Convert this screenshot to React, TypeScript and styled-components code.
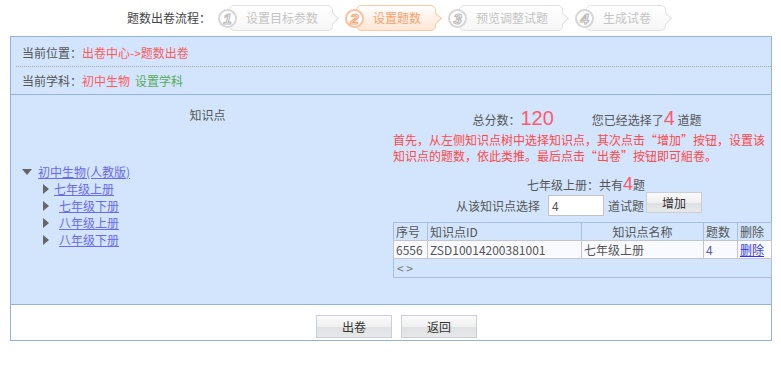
import React from "react";
import styled, { createGlobalStyle, css } from "styled-components";

const GlobalStyle = createGlobalStyle`
  html, body {
    margin: 0;
    padding: 0;
    background: #fff;
  }
  body {
    font-family: "Noto Sans CJK SC", "Liberation Sans", sans-serif;
    font-size: 12px;
    color: #555;
  }
`;

const Page = styled.div`
  width: 781px;
  padding-left: 10px;
  box-sizing: border-box;
`;

const Flow = styled.div`
  height: 36px;
  display: flex;
  align-items: center;
  padding-left: 117px;
`;

const FlowLabel = styled.span`
  color: #444;
  line-height: 16px;
  margin-right: 7px;
`;

const Step = styled.div`
  display: flex;
  align-items: center;
  margin-right: 12px;
`;

const StepNum = styled.span<{ $active?: boolean }>`
  position: relative;
  z-index: 1;
  width: 15px;
  height: 15px;
  margin-right: -8px;
  border-radius: 50%;
  border: 2px solid ${(p) => (p.$active ? "#fcc2a0" : "#d6d6d6")};
  background: #fff;
  display: flex;
  align-items: center;
  justify-content: center;
  font: italic bold 15px "Liberation Sans", sans-serif;
  color: #fff;
  -webkit-text-stroke: 1.2px ${(p) => (p.$active ? "#f7a878" : "#bdbdbd")};
`;

const StepBox = styled.div<{ $active?: boolean }>`
  position: relative;
  height: 24px;
  line-height: 24px;
  padding: 0 14px 0 16px;
  border: 1px solid #e0e0e0;
  border-radius: 5px;
  background: linear-gradient(#fff, #f6f6f6);
  color: #c4c4c4;

  &::after {
    content: "";
    position: absolute;
    right: -5px;
    top: 8px;
    width: 8px;
    height: 8px;
    transform: rotate(45deg);
    border-top: 1px solid #e0e0e0;
    border-right: 1px solid #e0e0e0;
    background: #fafafa;
  }

  ${(p) =>
    p.$active &&
    css`
      border-color: #fcc9a6;
      background: linear-gradient(#fff, #ffe6d4);
      color: #f7a06a;
      &::after {
        border-color: #fcc9a6;
        background: #fff0e5;
      }
    `}
`;

const Panel = styled.div`
  width: 762px;
  box-sizing: border-box;
  border: 1px solid #93b2e3;
  background: #d2e5fd;
`;

const InfoRow = styled.div<{ $dotted?: boolean }>`
  display: flex;
  align-items: center;
  margin-left: 5px;
  padding-left: 6px;
  height: ${(p) => (p.$dotted ? "30px" : "27px")};
  padding-top: ${(p) => (p.$dotted ? "2px" : "0")};
  box-sizing: border-box;
  border-bottom: ${(p) => (p.$dotted ? "1px dotted #a8a8a8" : "none")};
  line-height: 16px;
`;

const Red = styled.span`
  color: #ff5a5a;
`;

const Green = styled.span`
  color: #5aab5a;
  margin-left: 5px;
`;

const Main = styled.div`
  display: flex;
  height: 209px;
  border-top: 1px solid #93b2e3;
  border-bottom: 1px solid #93b2e3;
`;

const LeftCol = styled.div`
  width: 382px;
  padding-left: 11px;
  box-sizing: border-box;
`;

const ColTitle = styled.div`
  text-align: center;
  line-height: 16px;
  margin-top: 12px;
  color: #555;
`;

const Tree = styled.div`
  margin-top: 40px;
  line-height: 17px;
`;

const TreeRow = styled.div<{ $child?: boolean }>`
  display: flex;
  align-items: center;
  height: 17px;
  padding-left: ${(p) => (p.$child ? "21px" : "0")};
`;

const Caret = styled.span<{ $open?: boolean }>`
  width: 0;
  height: 0;
  ${(p) =>
    p.$open
      ? css`
          border-left: 5px solid transparent;
          border-right: 5px solid transparent;
          border-top: 6px solid #666;
          margin-right: 6px;
        `
      : css`
          border-top: 5px solid transparent;
          border-bottom: 5px solid transparent;
          border-left: 6px solid #666;
        `}
`;

const TreeLink = styled.a<{ $gap: number }>`
  color: #6a6aec;
  text-decoration: underline;
  margin-left: ${(p) => p.$gap}px;
`;

const RightCol = styled.div`
  width: 378px;
  display: flex;
  flex-direction: column;
`;

const ScoreRow = styled.div`
  display: flex;
  align-items: baseline;
  justify-content: center;
  margin-top: 13px;
  padding-left: 10px;
  height: 20px;
  color: #555;
`;

const Spacer = styled.span`
  width: 38px;
`;

const Big = styled.span<{ $size: number }>`
  color: #ff5a6a;
  font-family: "Liberation Sans", "DejaVu Sans", sans-serif;
  font-size: ${(p) => p.$size}px;
  line-height: 20px;
`;

const Hint = styled.div`
  color: #ff4848;
  line-height: 16px;
  margin-top: 4px;
  white-space: nowrap;
`;

const TotalRow = styled.div`
  display: flex;
  align-items: baseline;
  justify-content: center;
  margin-top: 10px;
  padding-left: 8px;
  height: 18px;
`;

const PickRow = styled.div`
  display: flex;
  align-items: center;
  justify-content: center;
  margin-top: 2px;
  padding-right: 6px;
  height: 22px;
`;

const NumInput = styled.input`
  width: 56px;
  height: 21px;
  box-sizing: border-box;
  margin: 0 4px 0 8px;
  padding: 0 3px;
  border: 1px solid #c3c3c3;
  background: #fff;
  font: 12px "Noto Sans CJK SC", sans-serif;
  color: #555;
`;

const GrayButton = styled.button<{ $w: number; $h: number }>`
  width: ${(p) => p.$w}px;
  height: ${(p) => p.$h}px;
  padding: 0;
  border: 1px solid #c9cfd6;
  background: linear-gradient(#fafafa 0%, #f0f0f0 50%, #dfe1e3 55%, #e8e8e8 100%);
  font: 12px "Noto Sans CJK SC", sans-serif;
  color: #333;
  line-height: ${(p) => p.$h - 6}px;
`;

const AddButton = styled(GrayButton)`
  margin-left: 2px;
  margin-top: -5px;
`;

const Table = styled.table`
  margin-top: 6px;
  width: 378px;
  border-collapse: collapse;
  table-layout: fixed;
  line-height: 17px;
  color: #555;
`;

const Th = styled.th<{ $w: number; $center?: boolean }>`
  width: ${(p) => p.$w - 5}px;
  height: 17px;
  padding: 0 2px;
  font-weight: normal;
  text-align: ${(p) => (p.$center ? "center" : "left")};
  border: 1px solid #a8bfe3;
  border-bottom-color: #c4c4cc;
`;

const Td = styled.td<{ $top?: boolean }>`
  height: 17px;
  padding: 0 2px;
  background: #f8faff;
  border: 1px solid #c4c4cc;
  vertical-align: ${(p) => (p.$top ? "top" : "middle")};
  white-space: nowrap;
  overflow: hidden;
`;

const Pager = styled.td`
  height: 18px;
  padding: 0 3px;
  border: 1px solid #a8bfe3;
  border-top-color: #c4c4cc;
  color: #777;
  line-height: 18px;
`;

const Count = styled.span`
  color: #5a5aa8;
`;

const DelLink = styled.a`
  color: #3333ee;
  text-decoration: underline;
`;

const Footer = styled.div`
  height: 35px;
  display: flex;
  justify-content: center;
  align-items: flex-start;
  gap: 9px;
  padding-top: 10px;
  padding-left: 11px;
  box-sizing: border-box;
  background: #fff;
`;

const steps = ["设置目标参数", "设置题数", "预览调整试题", "生成试卷"];
const grades = ["七年级上册", "七年级下册", "八年级上册", "八年级下册"];

export default function App() {
  return (
    <Page>
      <GlobalStyle />
      <Flow>
        <FlowLabel>题数出卷流程：</FlowLabel>
        {steps.map((s, i) => (
          <Step key={s}>
            <StepNum $active={i === 1}>{i + 1}</StepNum>
            <StepBox $active={i === 1}>{s}</StepBox>
          </Step>
        ))}
      </Flow>
      <Panel>
        <InfoRow $dotted>
          当前位置：<Red>出卷中心-&gt;题数出卷</Red>
        </InfoRow>
        <InfoRow>
          当前学科：<Red>初中生物</Red>
          <Green>设置学科</Green>
        </InfoRow>
        <Main>
          <LeftCol>
            <ColTitle>知识点</ColTitle>
            <Tree>
              <TreeRow>
                <Caret $open />
                <TreeLink $gap={0}>初中生物(人教版)</TreeLink>
              </TreeRow>
              {grades.map((g, i) => (
                <TreeRow $child key={g}>
                  <Caret />
                  <TreeLink $gap={i === 0 ? 5 : 10}>{g}</TreeLink>
                </TreeRow>
              ))}
            </Tree>
          </LeftCol>
          <RightCol>
            <ScoreRow>
              总分数：<Big $size={20}>120</Big>
              <Spacer />
              您已经选择了<Big $size={20}>4</Big>&nbsp;道题
            </ScoreRow>
            <Hint>
              首先，从左侧知识点树中选择知识点，其次点击“增加”按钮，设置该
              <br />
              知识点的题数，依此类推。最后点击“出卷”按钮即可組卷。
            </Hint>
            <TotalRow>
              七年级上册：共有<Big $size={18}>4</Big>题
            </TotalRow>
            <PickRow>
              从该知识点选择
              <NumInput defaultValue="4" />
              道试题
              <AddButton $w={56} $h={21}>
                增加
              </AddButton>
            </PickRow>
            <Table>
              <thead>
                <tr>
                  <Th $w={34}>序号</Th>
                  <Th $w={154}>知识点ID</Th>
                  <Th $w={122} $center>
                    知识点名称
                  </Th>
                  <Th $w={34}>题数</Th>
                  <Th $w={34}>删除</Th>
                </tr>
              </thead>
              <tbody>
                <tr>
                  <Td>6556</Td>
                  <Td>ZSD10014200381001</Td>
                  <Td $top>七年级上册</Td>
                  <Td>
                    <Count>4</Count>
                  </Td>
                  <Td>
                    <DelLink>删除</DelLink>
                  </Td>
                </tr>
                <tr>
                  <Pager colSpan={5}>&lt; &gt;</Pager>
                </tr>
              </tbody>
            </Table>
          </RightCol>
        </Main>
        <Footer>
          <GrayButton $w={76} $h={23}>出卷</GrayButton>
          <GrayButton $w={76} $h={23}>返回</GrayButton>
        </Footer>
      </Panel>
    </Page>
  );
}
